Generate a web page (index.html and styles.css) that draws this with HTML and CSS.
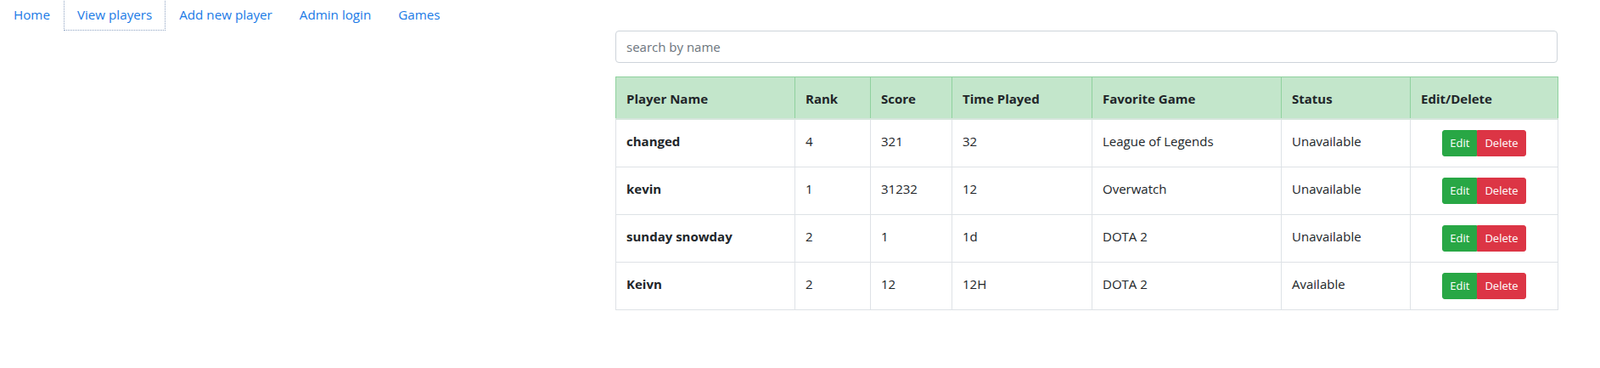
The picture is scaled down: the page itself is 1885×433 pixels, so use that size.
FILE: index.html
```html
<!DOCTYPE html>
<html lang="en">
<head>
<meta charset="utf-8">
<title>View players</title>
<link rel="stylesheet" href="styles.css">
</head>
<body>
<ul class="nav">
  <li><a class="nav-link" href="#">Home</a></li>
  <li><a class="nav-link active" href="#">View players</a></li>
  <li><a class="nav-link" href="#">Add new player</a></li>
  <li><a class="nav-link" href="#">Admin login</a></li>
  <li><a class="nav-link" href="#">Games</a></li>
</ul>
<main class="content">
  <input class="search" type="text" placeholder="search by name">
  <table class="players">
    <colgroup>
      <col class="c-name"><col class="c-rank"><col class="c-score"><col class="c-time"><col class="c-game"><col class="c-status"><col class="c-actions">
    </colgroup>
    <thead>
      <tr class="head-row">
        <th>Player Name</th><th>Rank</th><th>Score</th><th>Time Played</th><th>Favorite Game</th><th>Status</th><th>Edit/Delete</th>
      </tr>
    </thead>
    <tbody>
      <tr>
        <td class="name">changed</td><td>4</td><td>321</td><td>32</td><td>League of Legends</td><td>Unavailable</td>
        <td class="actions"><div class="btn-group"><button class="btn btn-edit">Edit</button><button class="btn btn-delete">Delete</button></div></td>
      </tr>
      <tr>
        <td class="name">kevin</td><td>1</td><td>31232</td><td>12</td><td>Overwatch</td><td>Unavailable</td>
        <td class="actions"><div class="btn-group"><button class="btn btn-edit">Edit</button><button class="btn btn-delete">Delete</button></div></td>
      </tr>
      <tr>
        <td class="name">sunday snowday</td><td>2</td><td>1</td><td>1d</td><td>DOTA 2</td><td>Unavailable</td>
        <td class="actions"><div class="btn-group"><button class="btn btn-edit">Edit</button><button class="btn btn-delete">Delete</button></div></td>
      </tr>
      <tr>
        <td class="name">Keivn</td><td>2</td><td>12</td><td>12H</td><td>DOTA 2</td><td>Available</td>
        <td class="actions"><div class="btn-group"><button class="btn btn-edit">Edit</button><button class="btn btn-delete">Delete</button></div></td>
      </tr>
    </tbody>
  </table>
</main>
</body>
</html>
```

FILE: styles.css
```css
* { box-sizing: border-box; }

body {
  margin: 0;
  font-family: "Segoe UI", "Open Sans", "Noto Sans", sans-serif;
  font-size: 15px;
  line-height: 24px;
  color: #212529;
  background: #fff;
}

.nav {
  display: flex;
  list-style: none;
  margin: -3px 0 0;
  padding: 0;
}

.nav-link {
  display: block;
  padding: 8px 16px 7px;
  font-size: 15.2px;
  color: #1a7ae6;
  text-decoration: none;
}

.nav-link.active {
  outline: 1px dotted #8ea3c2;
  outline-offset: -1px;
}

.content {
  margin: 0 50px 0 725px;
}

.search {
  display: block;
  width: 100%;
  height: 38px;
  padding: 6px 12px;
  margin: 0 0 16px;
  font-family: inherit;
  font-size: 15px;
  line-height: 24px;
  color: #495057;
  background: #fff;
  border: 1px solid #ced4da;
  border-radius: 4px;
}

.search::placeholder { color: #6c757d; }

.players {
  width: 100%;
  table-layout: fixed;
  border-collapse: collapse;
}

.c-name { width: 211px; }
.c-rank { width: 89px; }
.c-score { width: 96px; }
.c-time { width: 165px; }
.c-game { width: 223px; }
.c-status { width: 152px; }
.c-actions { width: 174px; }

.players th,
.players td {
  padding: 13px 12px 11px;
  text-align: left;
  vertical-align: top;
  border: 1px solid #dee2e6;
  white-space: nowrap;
}

.head-row th {
  background: #c3e6cb;
  border-color: #8fd19e;
  border-bottom: 2px solid #d5e5db;
  font-weight: 700;
}

.players td.name { font-weight: 700; }

.players td.actions {
  text-align: center;
  padding-top: 12px;
  padding-bottom: 12px;
}

.btn-group {
  display: inline-flex;
}

.btn {
  font-family: inherit;
  font-size: 13px;
  line-height: 21px;
  padding: 4px 8px;
  color: #fff;
  border: 1px solid transparent;
  cursor: pointer;
}

.btn-edit {
  background: #28a745;
  border-color: #28a745;
  border-radius: 3px 0 0 3px;
}

.btn-delete {
  background: #dc3545;
  border-color: #dc3545;
  border-radius: 0 3px 3px 0;
}
```
